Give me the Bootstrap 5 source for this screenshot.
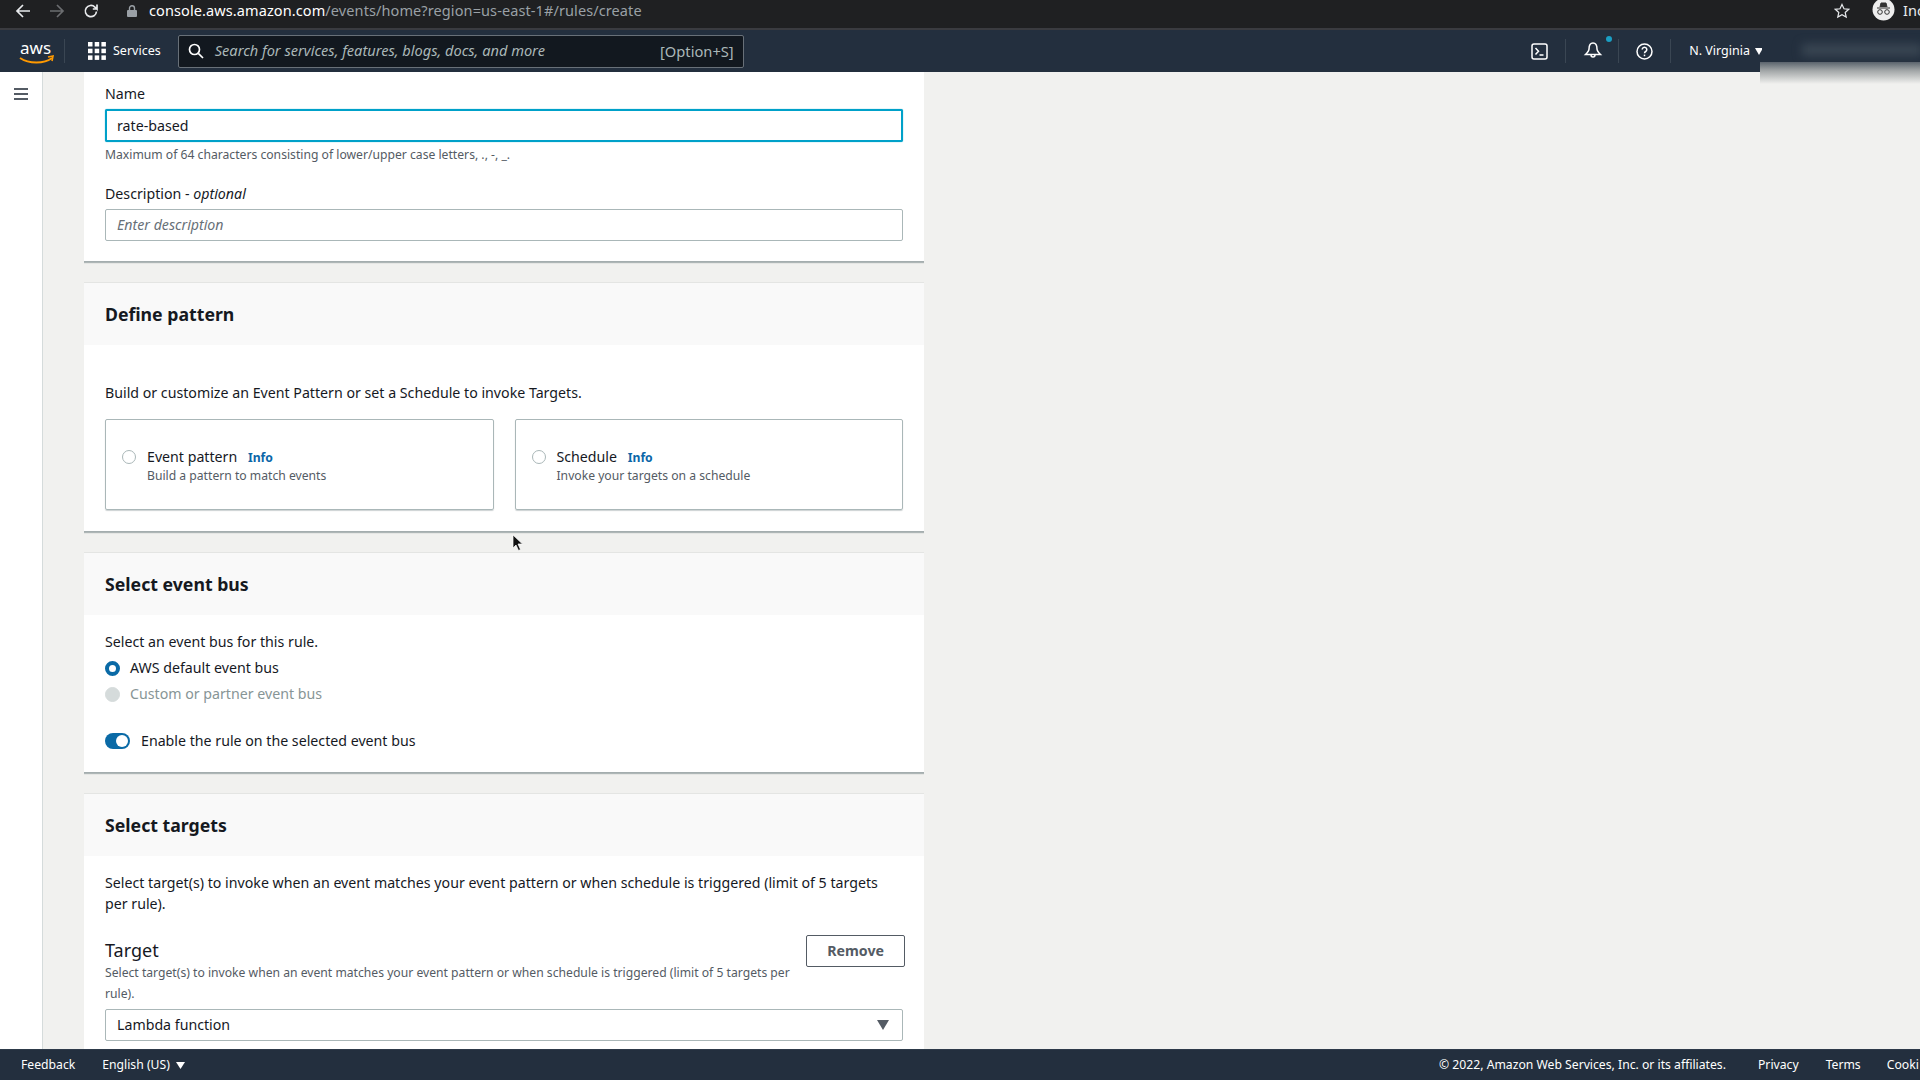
<!DOCTYPE html>
<html lang="en"><head><meta charset="utf-8"><title>Create rule</title>
<link href="https://cdn.jsdelivr.net/npm/bootstrap@5.3.0/dist/css/bootstrap.min.css" rel="stylesheet">
<style>
html,body{height:100%;margin:0;overflow:hidden}
body{font-family:"Noto Sans","Liberation Sans",sans-serif;font-size:14.2px;color:#16191f;background:#f1f1ef}
.shell{width:1920px;height:1080px;position:relative}
.chrome-bar{height:28px;background:#1f2022;color:#fff;flex:none;border-bottom:2px solid #3a3b40;box-sizing:content-box;overflow:hidden}
.chrome-row{height:21px;width:100%}
.omni{font-size:14.5px;margin-left:12px;letter-spacing:.1px}
.omni span{color:#9aa0a6}
.top-nav{height:42px;background:#232f3e;color:#fff;flex:none}
.right-tools{margin-right:157px}
.vsep{width:1px;height:24px;background:#3a4653}
.srch{width:566px;height:33px;margin-left:17px;background:#12181f;border:1px solid #687078;border-radius:2px;color:#aab7b8;font-style:italic;font-size:14.6px;padding:0 9px}
.srch kbd{all:unset;font-style:normal;margin-left:auto;color:#aab7b8;font-size:14.7px}
.svc{font-size:12.5px;margin-left:7px}
.side{width:43px;background:#fff;border-right:1px solid #d5dbdb;flex:none;padding:10px 0 0 13px}
.work{width:840px;margin-left:41px;overflow:hidden;padding-bottom:4px}
.pane{background:#fff;box-shadow:0 2px 1px 0 rgba(0,28,36,.28),0 0 1px 0 rgba(0,28,36,.3);margin-bottom:22px}
.pane-head{background:#f9f9f9;height:62px;padding:0 21px;font-size:17.7px;font-weight:700;display:flex;align-items:center}
.pane-body{padding:0 21px}
.lbl{font-size:14.2px;line-height:20px}
.hint{font-size:12.17px;color:#545b64;line-height:20px}
.field{height:32px;border:1px solid #aab7b8;border-radius:2px;padding:0 11px;display:flex;align-items:center;background:#fff}
.field.focused{height:33px;border:2px solid #00a1c9;box-shadow:0 0 1px #00a1c9;padding:0 10px}
.field.empty{color:#687078;font-style:italic}
.tile{flex:1;height:91px;border:1px solid #aab7b8;border-radius:2px;padding:27px 0 0 16px;box-shadow:0 1px 1px rgba(0,28,36,.2)}
.ring{width:14px;height:14px;border-radius:50%;border:1px solid #aab7b8;flex:none;margin-top:3px;background:#fff}
.ring.on{width:15px;height:15px;border:4px solid #0a6aa6;margin-top:0}
.ring.off{width:15px;height:15px;background:#d5dbdb;border-color:#d5dbdb;margin-top:0}
.info{color:#0b66a8;font-size:12.2px;font-weight:700;margin-left:7px}
.pick{line-height:20px;margin-left:3px}
.pick small{display:block;font-size:12.17px;color:#545b64;line-height:16px}
.rad-row{height:26px;display:flex;align-items:center;gap:10px}
.muted-row{color:#879596}
.tog{width:25px;height:16px;border-radius:8px;background:#0a6aa6;position:relative;flex:none}
.tog::after{content:"";position:absolute;right:2px;top:2px;width:12px;height:12px;border-radius:50%;background:#fff}
.rm{font-size:14.2px;font-weight:700;color:#545b64;border:1px solid #545b64;border-radius:2px;background:#fff;width:100px;height:32px;padding:0;line-height:28px;margin-right:-2px}
.bottom{height:31px;background:#232f3e;color:#fff;font-size:12.2px;flex:none;border-top:1px solid #2d3a49}
.bottom-right{margin-left:auto;width:481px;white-space:nowrap;overflow:hidden}
.smudge{position:absolute;left:1762px;top:30px;width:158px;height:32px;background:#232f3e;overflow:hidden;z-index:3}
.smudge-fade{position:absolute;left:1760px;top:62px;width:160px;height:22px;background:linear-gradient(#5b646d,#a3a7a8 40%,#f1f1ef);z-index:3}
.smudge i{position:absolute;left:40px;top:14px;width:120px;height:12px;background:#3a4653;filter:blur(5px)}
.pointer{position:absolute;left:512px;top:534px;z-index:4}
</style></head><body>
<div class="shell d-flex flex-column">
  <div class="chrome-bar">
    <div class="chrome-row d-flex align-items-center">
      <div class="d-flex align-items-center" style="gap:18px;padding-left:15px">
        <svg width="16" height="16" viewBox="0 0 16 16" fill="none" stroke="#e8eaed" stroke-width="1.7"><path d="M15 8H2M8 2L2 8l6 6"/></svg>
        <svg width="16" height="16" viewBox="0 0 16 16" fill="none" stroke="#6b6d70" stroke-width="1.7"><path d="M1 8h13M8 2l6 6-6 6"/></svg>
        <svg width="16" height="16" viewBox="0 0 16 16" fill="none" stroke="#e8eaed" stroke-width="1.7"><path d="M13.5 8.500a5.600 5.600 0 1 1-1.600-4.400L14 6V1.500M14 6H9.800"/></svg>
      </div>
      <svg style="margin-left:28px" width="10" height="12" viewBox="0 0 10 12"><rect x="0" y="5" width="10" height="7" rx="1" fill="#9aa0a6"/><path d="M2.500 5V3.200a2.500 2.500 0 0 1 5 0V5" fill="none" stroke="#9aa0a6" stroke-width="1.400"/></svg>
      <div class="omni">console.aws.amazon.com<span>/events/home?region=us-east-1#/rules/create</span></div>
      <svg class="ms-auto" width="16" height="16" viewBox="0 0 16 16" fill="none" stroke="#e8eaed" stroke-width="1.200"><path d="M8 1.500l2 4.300 4.700.5-3.500 3.200 1 4.600L8 11.800l-4.200 2.300 1-4.600L1.300 6.300 6 5.800z"/></svg>
      <svg style="margin:0 8px 0 22px" width="23" height="23" viewBox="0 0 23 23"><circle cx="11.500" cy="10.500" r="11" fill="#eee"/><path d="M5 9h13M8 8l1-4h5l1 4" stroke="#333" fill="#333"/><circle cx="8" cy="13" r="2.300" fill="none" stroke="#333"/><circle cx="15" cy="13" r="2.300" fill="none" stroke="#333"/></svg>
      <span style="font-size:14.500px;color:#e8eaed;width:17px;white-space:nowrap">Inc</span>
    </div>
  </div>
  <div class="top-nav d-flex align-items-center">
    <svg style="margin-left:18px" width="38" height="32" viewBox="0 0 38 32"><text x="2" y="19" font-size="17" fill="#fff" font-family="Noto Sans">aws</text><path d="M2 23c9 6 24 6 32 0" fill="none" stroke="#f90" stroke-width="2"/><path d="M30 22l5-1-1 5" fill="none" stroke="#f90" stroke-width="1.600"/></svg>
    <div class="vsep" style="margin-left:8px"></div>
    <svg style="margin-left:23px" width="18" height="18" viewBox="0 0 18 18" fill="#fff"><rect width="4.500" height="4.500"/><rect x="6.700" width="4.500" height="4.500"/><rect x="13.400" width="4.500" height="4.500"/><rect y="6.700" width="4.500" height="4.500"/><rect x="6.700" y="6.700" width="4.500" height="4.500"/><rect x="13.400" y="6.700" width="4.500" height="4.500"/><rect y="13.400" width="4.500" height="4.500"/><rect x="6.700" y="13.400" width="4.500" height="4.500"/><rect x="13.400" y="13.400" width="4.500" height="4.500"/></svg>
    <span class="svc">Services</span>
    <div class="srch d-flex align-items-center" style="gap:11px">
      <svg width="16" height="16" viewBox="0 0 16 16" fill="none" stroke="#fff" stroke-width="1.700"><circle cx="6.500" cy="6.500" r="5"/><path d="M10.300 10.300L15 15"/></svg>
      <span>Search for services, features, blogs, docs, and more</span><kbd>[Option+S]</kbd>
    </div>
    <div class="right-tools d-flex align-items-center ms-auto">
      <svg width="17" height="17" viewBox="0 0 17 17" fill="none" stroke="#fff" stroke-width="1.500"><rect x="1" y="1" width="15" height="15" rx="2"/><path d="M4.500 5l3 3.200-3 3.200M8.500 12h4"/></svg>
      <div class="vsep" style="margin:0 17px"></div>
      <svg width="20" height="20" viewBox="0 0 20 20" fill="none" stroke="#fff" stroke-width="1.500"><path d="M10 2c-3.300 0-4 3-4 6 0 2-2 4-3.500 5.500h15C16 12 14 10 14 8c0-3-.7-6-4-6zM8 14a2 2 0 0 0 4 0"/></svg>
      <svg class="align-self-start" style="margin:-3px 0 0 3px" width="6" height="6"><circle cx="3" cy="3" r="3" fill="#1a9fc4"/></svg>
      <div class="vsep" style="margin:0 17px 0 6px"></div>
      <svg width="17" height="17" viewBox="0 0 17 17" fill="none" stroke="#fff" stroke-width="1.500"><circle cx="8.500" cy="8.500" r="7.500"/><path d="M6.200 6.500a2.300 2.300 0 1 1 3.500 2c-.8.500-1.200.9-1.200 1.800"/><path d="M8.500 11.600v1.600"/></svg>
      <div class="vsep" style="margin:0 18px 0 17px"></div>
      <span style="font-size:12.500px">N. Virginia</span><svg style="margin-left:5px" width="8" height="7" viewBox="0 0 8 7"><path d="M0 0h8L4 7z" fill="#fff"/></svg>
    </div>
  </div>
  <div class="d-flex flex-grow-1 overflow-hidden">
    <div class="side"><svg width="16" height="14" viewBox="0 0 16 14" stroke="#545b64" stroke-width="2"><path d="M1 2h14M1 7h14M1 12h14"/></svg></div>
    <div class="work">
      <section class="pane" style="height:189px;padding:12px 21px 0">
        <div class="lbl">Name</div>
        <div class="field focused" style="margin-top:5px">rate-based</div>
        <div class="hint" style="margin-top:3px">Maximum of 64 characters consisting of lower/upper case letters, ., -, _.</div>
        <div class="lbl" style="margin-top:19px">Description - <em>optional</em></div>
        <div class="field empty" style="margin-top:5px">Enter description</div>
      </section>
      <section class="pane">
        <div class="pane-head">Define pattern</div>
        <div class="pane-body" style="padding-bottom:21px">
          <div style="padding:38px 0 16px;line-height:20px">Build or customize an Event Pattern or set a Schedule to invoke Targets.</div>
          <div class="d-flex" style="gap:21px">
            <div class="tile d-flex gap-2"><div class="ring"></div><div class="pick">Event pattern <span class="info">Info</span><small>Build a pattern to match events</small></div></div>
            <div class="tile d-flex gap-2"><div class="ring"></div><div class="pick">Schedule <span class="info">Info</span><small>Invoke your targets on a schedule</small></div></div>
          </div>
        </div>
      </section>
      <section class="pane">
        <div class="pane-head">Select event bus</div>
        <div class="pane-body" style="padding-top:17px;padding-bottom:21px">
          <div style="line-height:20px;margin-bottom:3px">Select an event bus for this rule.</div>
          <div class="rad-row"><div class="ring on"></div>AWS default event bus</div>
          <div class="rad-row muted-row"><div class="ring off"></div>Custom or partner event bus</div>
          <div class="d-flex align-items-center" style="gap:11px;margin-top:24px;line-height:20px"><div class="tog"></div>Enable the rule on the selected event bus</div>
        </div>
      </section>
      <section class="pane" style="padding-bottom:60px">
        <div class="pane-head">Select targets</div>
        <div class="pane-body">
          <div style="padding-top:16px;line-height:21px">Select target(s) to invoke when an event matches your event pattern or when schedule is triggered (limit of 5 targets per rule).</div>
          <div class="d-flex justify-content-between align-items-start" style="margin-top:21px">
            <div style="width:710px">
              <div style="font-size:18px;line-height:25px;margin-top:3px">Target</div>
              <div class="hint" style="line-height:21px;margin-top:-1px">Select target(s) to invoke when an event matches your event pattern or when schedule is triggered (limit of 5 targets per rule).</div>
            </div>
            <button class="btn rm" type="button">Remove</button>
          </div>
          <div class="field" style="margin-top:5px">Lambda function<svg class="ms-auto" style="margin-right:2px" width="12" height="10" viewBox="0 0 12 10"><path d="M0 0h12L6 10z" fill="#545b64"/></svg></div>
        </div>
      </section>
    </div>
  </div>
  <footer class="bottom d-flex align-items-center">
    <span style="margin-left:21px">Feedback</span>
    <span style="margin-left:27px">English (US)</span><svg style="margin-left:6px" width="9" height="7" viewBox="0 0 9 7"><path d="M0 0h9L4.500 7z" fill="#fff"/></svg>
    <div class="bottom-right"><span>© 2022, Amazon Web Services, Inc. or its affiliates.</span><span style="margin-left:32px">Privacy</span><span style="margin-left:27px">Terms</span><span style="margin-left:26px">Cooki</span></div>
  </footer>
  <div class="smudge"><i></i></div><div class="smudge-fade"></div>
  <svg class="pointer" width="12" height="18" viewBox="0 0 12 18"><path d="M1 1v13l3-3 2.500 5.500 2-1L6 10h4.500z" fill="#111" stroke="#fff" stroke-width=".7"/></svg>
</div>
</body></html>
